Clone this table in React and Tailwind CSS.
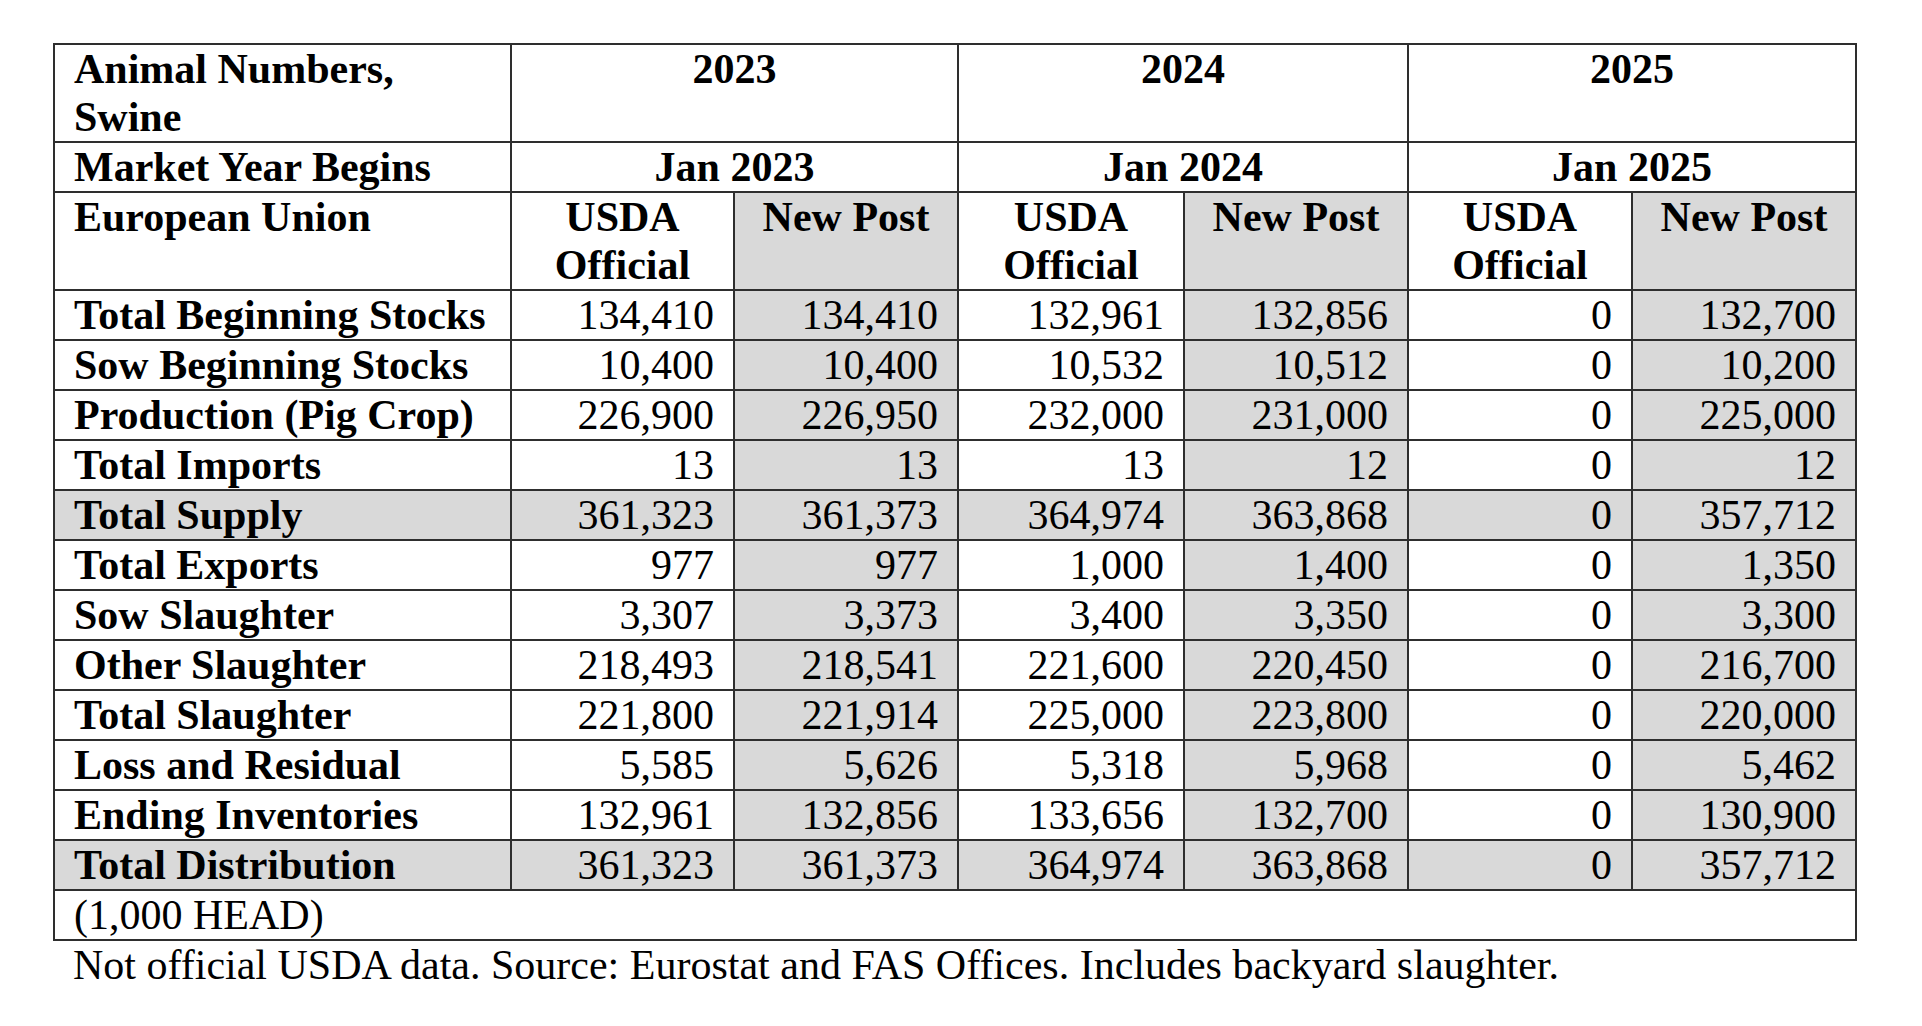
import React from "react";

const rows = [
  ["Total Beginning Stocks", ["134,410", "134,410", "132,961", "132,856", "0", "132,700"], false],
  ["Sow Beginning Stocks", ["10,400", "10,400", "10,532", "10,512", "0", "10,200"], false],
  ["Production (Pig Crop)", ["226,900", "226,950", "232,000", "231,000", "0", "225,000"], false],
  ["Total Imports", ["13", "13", "13", "12", "0", "12"], false],
  ["Total Supply", ["361,323", "361,373", "364,974", "363,868", "0", "357,712"], true],
  ["Total Exports", ["977", "977", "1,000", "1,400", "0", "1,350"], false],
  ["Sow Slaughter", ["3,307", "3,373", "3,400", "3,350", "0", "3,300"], false],
  ["Other Slaughter", ["218,493", "218,541", "221,600", "220,450", "0", "216,700"], false],
  ["Total Slaughter", ["221,800", "221,914", "225,000", "223,800", "0", "220,000"], false],
  ["Loss and Residual", ["5,585", "5,626", "5,318", "5,968", "0", "5,462"], false],
  ["Ending Inventories", ["132,961", "132,856", "133,656", "132,700", "0", "130,900"], false],
  ["Total Distribution", ["361,323", "361,373", "364,974", "363,868", "0", "357,712"], true],
];

const cell = "border-2 border-[#2e2e2e] align-top p-0";
const gray = "bg-[#d9d9d9]";

export default function App() {
  return (
    <div
      className="min-h-[1026px] w-[1922px] bg-white text-black pt-[43px] pl-[53px] text-[42px] leading-[48px]"
      style={{ fontFamily: '"Liberation Serif", "Times New Roman", serif' }}
    >
      <table className="border-collapse table-fixed w-[1802px]">
        <colgroup>
          <col className="w-[457px]" />
          <col className="w-[223px]" />
          <col className="w-[224px]" />
          <col className="w-[226px]" />
          <col className="w-[224px]" />
          <col className="w-[224px]" />
          <col className="w-[224px]" />
        </colgroup>
        <tbody>
          <tr>
            <td className={`${cell} font-bold pl-[19px] whitespace-nowrap`}>
              Animal Numbers,
              <br />
              Swine
            </td>
            <td colSpan={2} className={`${cell} font-bold text-center`}>2023</td>
            <td colSpan={2} className={`${cell} font-bold text-center`}>2024</td>
            <td colSpan={2} className={`${cell} font-bold text-center`}>2025</td>
          </tr>
          <tr>
            <td className={`${cell} font-bold pl-[19px] whitespace-nowrap`}>Market Year Begins</td>
            <td colSpan={2} className={`${cell} font-bold text-center`}>Jan 2023</td>
            <td colSpan={2} className={`${cell} font-bold text-center`}>Jan 2024</td>
            <td colSpan={2} className={`${cell} font-bold text-center`}>Jan 2025</td>
          </tr>
          <tr>
            <td className={`${cell} font-bold pl-[19px] whitespace-nowrap`}>European Union</td>
            {[0, 1, 2].map((i) => (
              <React.Fragment key={i}>
                <td className={`${cell} font-bold text-center`}>
                  USDA
                  <br />
                  Official
                </td>
                <td className={`${cell} ${gray} font-bold text-center`}>New Post</td>
              </React.Fragment>
            ))}
          </tr>
          {rows.map(([label, vals, shaded]) => (
            <tr key={label} className={shaded ? gray : ""}>
              <td className={`${cell} font-bold pl-[19px] whitespace-nowrap`}>{label}</td>
              {vals.map((v, i) => (
                <td
                  key={i}
                  className={`${cell} text-right pr-[19px] ${i % 2 === 1 ? gray : ""}`}
                >
                  {v}
                </td>
              ))}
            </tr>
          ))}
          <tr>
            <td colSpan={7} className={`${cell} pl-[19px]`}>(1,000 HEAD)</td>
          </tr>
        </tbody>
      </table>
      <div className="pl-[20px]">
        Not official USDA data. Source: Eurostat and FAS Offices. Includes backyard slaughter.
      </div>
    </div>
  );
}
